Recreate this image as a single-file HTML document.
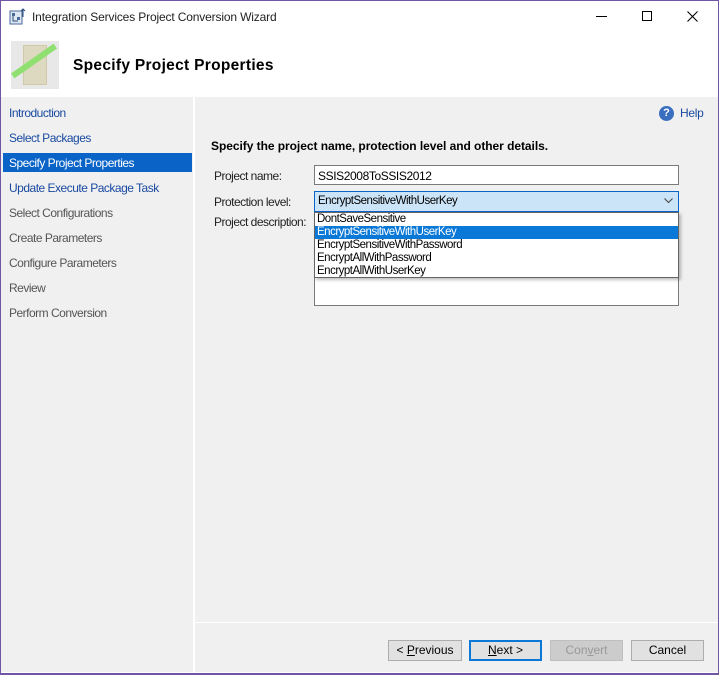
<!DOCTYPE html>
<html><head><style>
*{margin:0;padding:0;box-sizing:border-box}
body{width:719px;height:675px;background:#fff;font-family:"Liberation Sans",sans-serif;font-size:12px;position:relative;overflow:hidden;color:#000}
.a{position:absolute;white-space:nowrap}
.nav{position:absolute;left:9px;font-size:12px;letter-spacing:-0.5px}
.lbl{letter-spacing:-0.5px;color:#222}
.btn{position:absolute;top:640px;height:21px;border:1px solid #adadad;background:#e1e1e1;text-align:center;line-height:19px;font-size:12px}
.opt{height:13px;line-height:13px;padding-left:2px;font-size:11.5px;letter-spacing:-0.5px}
</style></head><body>
<div class="a" style="left:0;top:0;width:719px;height:675px;border:1px solid #6f55a3;border-bottom-width:2px"></div>
<!-- title -->
<svg class="a" style="left:9px;top:8px" width="18" height="18" viewBox="0 0 18 18"><rect x="1" y="3" width="12" height="13" fill="#dfe8f2" stroke="#4a6a9a"/><rect x="3" y="5" width="3" height="3" fill="#4a6a9a"/><rect x="8" y="9" width="3" height="3" fill="#4a6a9a"/><path d="M4 8v5h5M14 1v8M12 3l2-2 2 2" stroke="#2a4a7a" fill="none"/></svg>
<div class="a" style="left:32px;top:10px;font-size:12px;letter-spacing:-0.15px;color:#222">Integration Services Project Conversion Wizard</div>
<div class="a" style="left:596px;top:16px;width:11px;height:1px;background:#000"></div>
<div class="a" style="left:642px;top:11px;width:10px;height:10px;border:1px solid #000"></div>
<svg class="a" style="left:687px;top:11px" width="11" height="11" viewBox="0 0 11 11"><path d="M0.5 0.5l10 10M10.5 0.5l-10 10" stroke="#000" stroke-width="1.1"/></svg>
<!-- header -->
<div class="a" style="left:11px;top:41px;width:48px;height:48px;background:#e8e8e8"></div>
<div class="a" style="left:23px;top:45px;width:24px;height:40px;background:#ddd9c0;border:1px solid #cfc9a8"></div>
<div class="a" style="left:8px;top:58px;width:52px;height:6px;background:#8fe070;transform:rotate(-35deg)"></div>
<div class="a" style="left:73px;top:57px;font-size:15.5px;font-weight:bold;letter-spacing:0.3px">Specify Project Properties</div>
<!-- panels -->
<div class="a" style="left:1px;top:97px;width:192px;height:575px;background:#f0f0f0"></div>
<div class="a" style="left:195px;top:97px;width:523px;height:575px;background:#f0f0f0"></div>
<div class="a" style="left:195px;top:622px;width:523px;height:1px;background:#fff"></div>
<div class="a" style="left:3px;top:153px;width:189px;height:19px;background:#0a64c8"></div>
<div class="nav" style="top:106px;color:#1a4aa0">Introduction</div>
<div class="nav" style="top:131px;color:#1a4aa0">Select Packages</div>
<div class="nav" style="top:156px;color:#fff">Specify Project Properties</div>
<div class="nav" style="top:181px;color:#1a4aa0">Update Execute Package Task</div>
<div class="nav" style="top:206px;color:#555">Select Configurations</div>
<div class="nav" style="top:231px;color:#555">Create Parameters</div>
<div class="nav" style="top:256px;color:#555">Configure Parameters</div>
<div class="nav" style="top:281px;color:#555">Review</div>
<div class="nav" style="top:306px;color:#555">Perform Conversion</div>
<!-- help -->
<div class="a" style="left:659px;top:106px;width:15px;height:15px;border-radius:50%;background:#3a6fc0;color:#fff;font-size:11px;font-weight:bold;text-align:center;line-height:15px">?</div>
<div class="a" style="left:680px;top:106px;color:#1a4aa0;letter-spacing:-0.3px">Help</div>
<div class="a" style="left:211px;top:139px;font-weight:bold;font-size:12px;letter-spacing:-0.05px">Specify the project name, protection level and other details.</div>
<div class="a lbl" style="left:214px;top:169px">Project name:</div>
<div class="a lbl" style="left:214px;top:195px">Protection level:</div>
<div class="a lbl" style="left:214px;top:215px">Project description:</div>
<div class="a" style="left:314px;top:165px;width:365px;height:20px;background:#fff;border:1px solid #7a7a7a;padding:3px 3px;letter-spacing:-0.4px">SSIS2008ToSSIS2012</div>
<div class="a" style="left:314px;top:211px;width:365px;height:95px;background:#fff;border:1px solid #7a7a7a"></div>
<div class="a" style="left:314px;top:191px;width:365px;height:21px;background:#cce4f7;border:1px solid #0a64c8;padding:3px 3px;font-size:11.5px;letter-spacing:-0.5px">EncryptSensitiveWithUserKey</div>
<svg class="a" style="left:664px;top:198px" width="9" height="6" viewBox="0 0 9 6"><path d="M0.5 0.5l4 4 4-4" stroke="#444" fill="none"/></svg>
<div class="a" style="left:314px;top:212px;width:365px;height:66px;background:#fff;border:1px solid #646464;box-shadow:2px 2px 3px rgba(0,0,0,0.25);padding-top:0">
<div class="opt">DontSaveSensitive</div>
<div class="opt" style="background:#0a78d7;color:#fff">EncryptSensitiveWithUserKey</div>
<div class="opt">EncryptSensitiveWithPassword</div>
<div class="opt">EncryptAllWithPassword</div>
<div class="opt">EncryptAllWithUserKey</div>
</div>
<!-- buttons -->
<div class="btn" style="left:388px;width:74px">&lt; <u>P</u>revious</div>
<div class="btn" style="left:469px;width:73px;border:2px solid #0a78d7;line-height:17px"><u>N</u>ext &gt;</div>
<div class="btn" style="left:550px;width:73px;background:#ccc;border-color:#bfbfbf;color:#999">Con<u>v</u>ert</div>
<div class="btn" style="left:631px;width:73px">Cancel</div>
</body></html>
